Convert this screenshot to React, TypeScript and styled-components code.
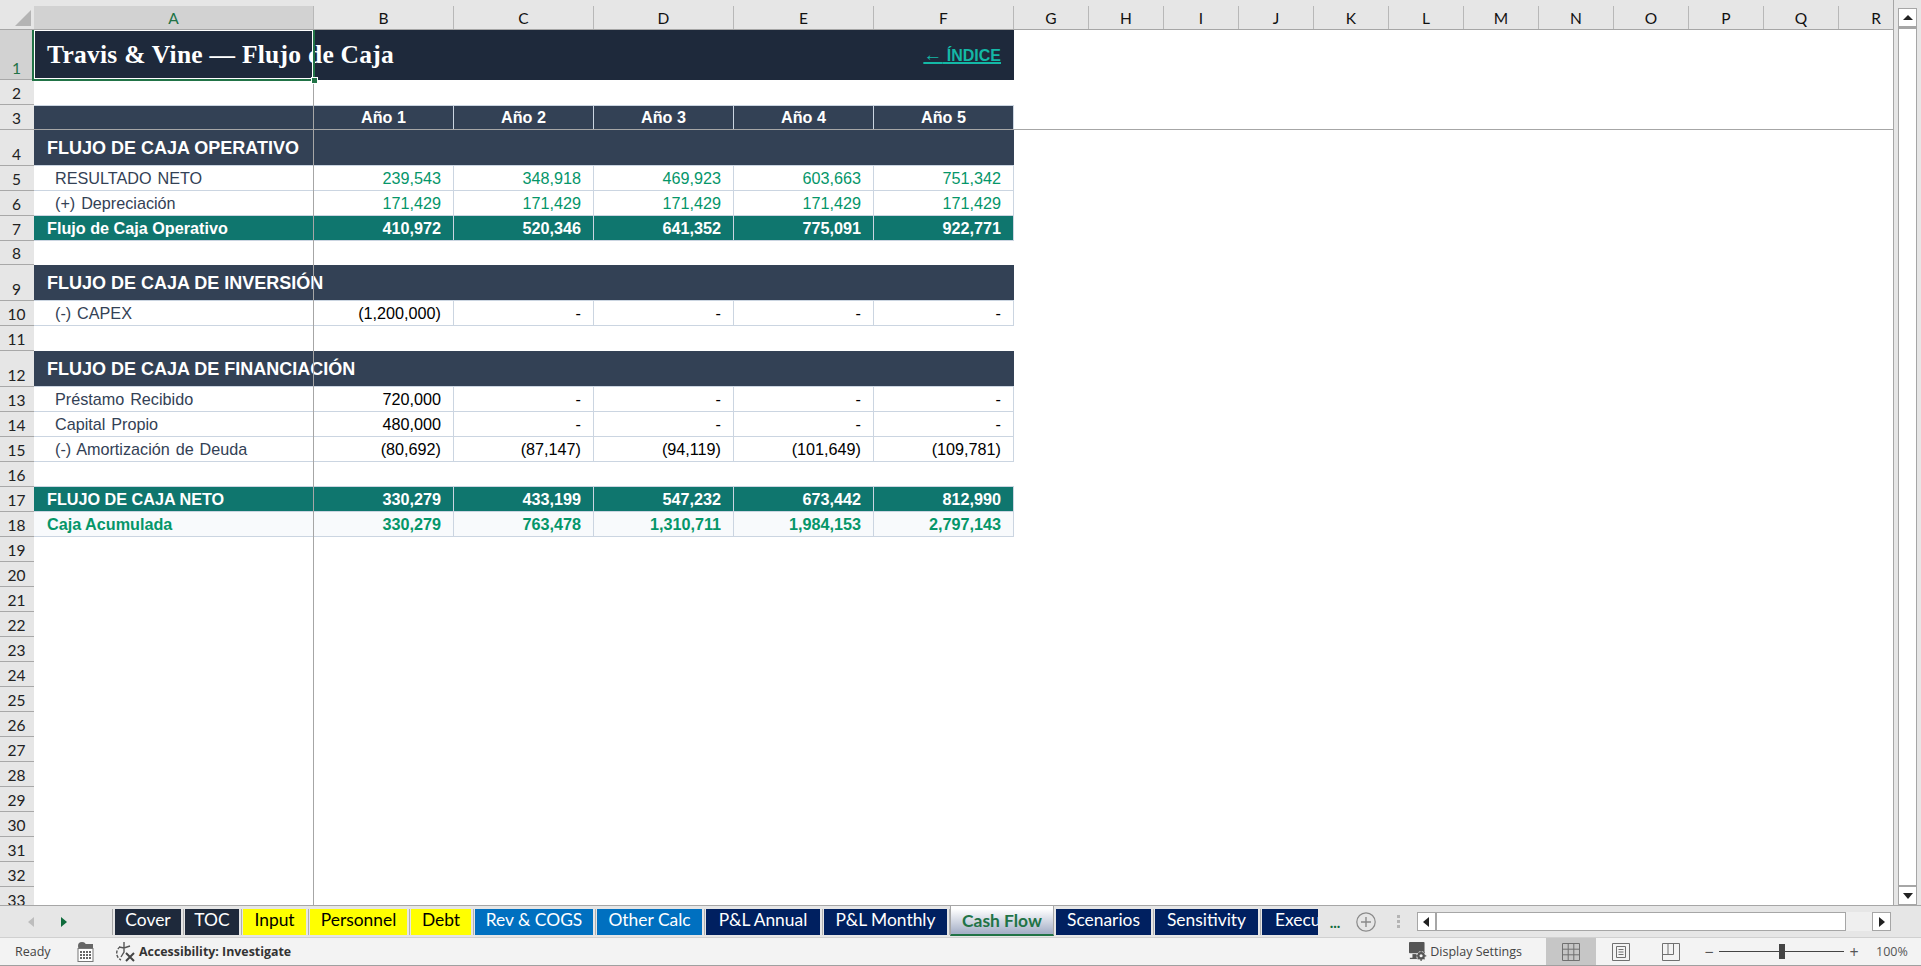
import styled, { createGlobalStyle, css } from 'styled-components'

const HAIR = '#cbd5e1'
const SLATE = '#334155'
const TEAL = '#0f766e'
const GREEN = '#059669'
const XL_GREEN = '#217346'
const CHROME = '#e6e6e6'
const LINE = '#a6a6a6'

const COLUMNS = [
  { name: 'A', width: 280 },
  { name: 'B', width: 140 },
  { name: 'C', width: 140 },
  { name: 'D', width: 140 },
  { name: 'E', width: 140 },
  { name: 'F', width: 140 },
  ...'GHIJKLMNOPQR'.split('').map((name) => ({ name, width: 75 })),
]

const ROW_HEIGHTS = [
  50, 25, 25, 36, 25, 25, 25, 24, 36, 25, 25, 36, 25, 25, 25, 25, 25, 25, 25, 25, 25, 25, 25, 25,
  25, 25, 25, 25, 25, 25, 25, 25, 25,
]

type Tone = 'dark' | 'yellow' | 'blue' | 'navy'

const TABS: { label: string; width: number; tone: Tone }[] = [
  { label: 'Cover', width: 66, tone: 'dark' },
  { label: 'TOC', width: 54, tone: 'dark' },
  { label: 'Input', width: 63, tone: 'yellow' },
  { label: 'Personnel', width: 97, tone: 'yellow' },
  { label: 'Debt', width: 60, tone: 'yellow' },
  { label: 'Rev & COGS', width: 118, tone: 'blue' },
  { label: 'Other Calc', width: 105, tone: 'blue' },
  { label: 'P&L Annual', width: 114, tone: 'navy' },
  { label: 'P&L Monthly', width: 123, tone: 'navy' },
]

const TABS_AFTER: { label: string; width: number; tone: Tone }[] = [
  { label: 'Scenarios', width: 95, tone: 'navy' },
  { label: 'Sensitivity', width: 103, tone: 'navy' },
]

const TAB_BG: Record<Tone, string> = {
  dark: '#1e293b',
  yellow: '#ffff00',
  blue: '#0070c0',
  navy: '#002060',
}

const GlobalStyle = createGlobalStyle`
  html, body {
    margin: 0;
    padding: 0;
    background: #fff;
    overflow: hidden;
  }
  * {
    box-sizing: border-box;
  }
`

const DataLine = ({
  label,
  values,
  green,
}: {
  label: string
  values: string[]
  green?: boolean
}) => (
  <Row $h={25}>
    <LabelCell>{label}</LabelCell>
    {values.map((v, i) => (
      <ValueCell key={i} $green={green}>
        {v}
      </ValueCell>
    ))}
  </Row>
)

const TotalLine = ({ label, values }: { label: string; values: string[] }) => (
  <Row $h={25}>
    <TotalLabel>{label}</TotalLabel>
    {values.map((v, i) => (
      <TotalValue key={i}>{v}</TotalValue>
    ))}
  </Row>
)

const AccumLine = ({ label, values }: { label: string; values: string[] }) => (
  <Row $h={25}>
    <AccumLabel>{label}</AccumLabel>
    {values.map((v, i) => (
      <AccumValue key={i}>{v}</AccumValue>
    ))}
  </Row>
)

const Triangle = ({ dir, color }: { dir: 'left' | 'right' | 'up' | 'down'; color: string }) => {
  const points = {
    left: '8,1 8,11 2,6',
    right: '3,1 3,11 9,6',
    up: '1,8 11,8 6,3',
    down: '1,3 11,3 6,9',
  }[dir]
  return (
    <svg width="12" height="12" viewBox="0 0 12 12">
      <polygon points={points} fill={color} />
    </svg>
  )
}

const MacroIcon = () => (
  <svg width="17" height="20" viewBox="0 0 17 20">
    <circle cx="5" cy="4" r="4" fill="#666" />
    <rect x="8" y="2" width="8" height="4" fill="#666" />
    <rect x="1" y="6.5" width="15" height="13" fill="#fff" stroke="#777" />
    <g fill="#666">
      {[9, 12, 15].map((y) =>
        [4, 7, 10, 13].map((x) => <rect key={`${x}-${y}`} x={x - 1} y={y} width="2" height="2" />),
      )}
    </g>
  </svg>
)

const AccessIcon = () => (
  <svg width="20" height="22" viewBox="0 0 20 22" fill="none" stroke="#555" strokeWidth="1.4">
    <path d="M5 6a7.5 7.5 0 0 0 1 13" strokeDasharray="3 1.5" />
    <path d="M9 1v6M4 6l5 1 6-2M9 7v4l-3 5" />
    <path d="M11 12l8 8M19 12l-8 8" stroke="#444" strokeWidth="2" />
  </svg>
)

const DisplayIcon = () => (
  <svg width="19" height="21" viewBox="0 0 22 24">
    <rect x="0" y="1" width="18" height="13" rx="1" fill="#555" />
    <rect x="4" y="15" width="5" height="5" fill="#555" />
    <path d="M1 20h8" stroke="#555" strokeWidth="1.5" />
    <circle cx="14" cy="17" r="5" fill="#555" stroke="#f3f3f3" />
    <path d="M14 11v12M8 17h12M10 13l8 8M18 13l-8 8" stroke="#555" strokeWidth="1.4" />
    <circle cx="14" cy="17" r="1.8" fill="#f3f3f3" />
  </svg>
)

const NormalViewIcon = () => (
  <svg width="18" height="18" viewBox="0 0 18 18" fill="none" stroke="#707070">
    <path d="M.5.5h17v17H.5zM6.2.5v17M11.8.5v17M.5 6.2h17M.5 11.8h17" />
  </svg>
)

const LayoutViewIcon = () => (
  <svg width="18" height="18" viewBox="0 0 18 18" fill="none" stroke="#707070">
    <path d="M.5.5h17v17H.5zM4.5 3.5h9v11h-9zM6.5 6.5h5M6.5 9h5M6.5 11.5h5" />
  </svg>
)

const BreakViewIcon = () => (
  <svg width="18" height="18" viewBox="0 0 18 18" fill="none" stroke="#707070">
    <path d="M.5.5h17v17H.5zM.5 11.5h11V.5M6 .5v11" />
  </svg>
)

export default function App() {
  return (
    <Window>
      <GlobalStyle />
      <Workspace>
        <SheetPane>
          <HeaderStrip>
            <Corner>
              <svg width="16" height="16" viewBox="0 0 16 16">
                <polygon points="16,0 16,16 0,16" fill="#b4b4b4" />
              </svg>
            </Corner>
            {COLUMNS.map((c) => (
              <ColHead key={c.name} $w={c.width} $active={c.name === 'A'}>
                {c.name}
              </ColHead>
            ))}
          </HeaderStrip>
          <SheetBody>
            <RowHeads>
              {ROW_HEIGHTS.map((h, i) => (
                <RowHead key={i} $h={h} $active={i === 0}>
                  {i + 1}
                </RowHead>
              ))}
            </RowHeads>
            <Grid>
              <TitleRow>
                <TitleText>Travis &amp; Vine — Flujo de Caja</TitleText>
                <BackLink>
                  <LinkArrow>←</LinkArrow> ÍNDICE
                </BackLink>
                <Selection>
                  <FillHandle />
                </Selection>
              </TitleRow>
              <Blank $h={25} />
              <Row $h={25}>
                <YearCell />
                {['Año 1', 'Año 2', 'Año 3', 'Año 4', 'Año 5'].map((y) => (
                  <YearCell key={y}>{y}</YearCell>
                ))}
              </Row>
              <SectionRow>FLUJO DE CAJA OPERATIVO</SectionRow>
              <DataLine
                label="RESULTADO NETO"
                values={['239,543', '348,918', '469,923', '603,663', '751,342']}
                green
              />
              <DataLine
                label="(+) Depreciación"
                values={['171,429', '171,429', '171,429', '171,429', '171,429']}
                green
              />
              <TotalLine
                label="Flujo de Caja Operativo"
                values={['410,972', '520,346', '641,352', '775,091', '922,771']}
              />
              <Blank $h={24} />
              <SectionRow>FLUJO DE CAJA DE INVERSIÓN</SectionRow>
              <DataLine label="(-) CAPEX" values={['(1,200,000)', '-', '-', '-', '-']} />
              <Blank $h={25} />
              <SectionRow>FLUJO DE CAJA DE FINANCIACIÓN</SectionRow>
              <DataLine label="Préstamo Recibido" values={['720,000', '-', '-', '-', '-']} />
              <DataLine label="Capital Propio" values={['480,000', '-', '-', '-', '-']} />
              <DataLine
                label="(-) Amortización de Deuda"
                values={['(80,692)', '(87,147)', '(94,119)', '(101,649)', '(109,781)']}
              />
              <Blank $h={25} />
              <TotalLine
                label="FLUJO DE CAJA NETO"
                values={['330,279', '433,199', '547,232', '673,442', '812,990']}
              />
              <AccumLine
                label="Caja Acumulada"
                values={['330,279', '763,478', '1,310,711', '1,984,153', '2,797,143']}
              />
              <FreezeColumn />
              <FreezeRow />
            </Grid>
          </SheetBody>
        </SheetPane>
        <VScroll>
          <ScrollButton>
            <Triangle dir="up" color="#222" />
          </ScrollButton>
          <VThumb />
          <ScrollButton>
            <Triangle dir="down" color="#222" />
          </ScrollButton>
        </VScroll>
      </Workspace>
      <TabBar>
        <TabNav>
          <Triangle dir="left" color="#bdbdbd" />
          <Triangle dir="right" color="#0f6b3c" />
        </TabNav>
        <TabList>
          {TABS.map((t) => (
            <Tab key={t.label} $w={t.width} $tone={t.tone}>
              {t.label}
            </Tab>
          ))}
          <ActiveTab>Cash Flow</ActiveTab>
          {TABS_AFTER.map((t) => (
            <Tab key={t.label} $w={t.width} $tone={t.tone}>
              {t.label}
            </Tab>
          ))}
          <ClippedTab>Execu</ClippedTab>
        </TabList>
        <MoreTabs>...</MoreTabs>
        <AddTab>
          <svg width="20" height="20" viewBox="0 0 20 20" fill="none" stroke="#8a8a8a">
            <circle cx="10" cy="10" r="9.2" strokeWidth="1.2" />
            <path d="M10 5v10M5 10h10" strokeWidth="1.4" />
          </svg>
        </AddTab>
        <SplitDots>
          <i />
          <i />
          <i />
        </SplitDots>
        <HScroll>
          <ScrollButton>
            <Triangle dir="left" color="#222" />
          </ScrollButton>
          <HThumb />
          <ScrollButton>
            <Triangle dir="right" color="#222" />
          </ScrollButton>
        </HScroll>
      </TabBar>
      <StatusBar>
        <StatusLeft>
          <StatusText>Ready</StatusText>
          <IconSlot $ml={27}>
            <MacroIcon />
          </IconSlot>
          <IconSlot $ml={21}>
            <AccessIcon />
          </IconSlot>
          <AccessText>Accessibility: Investigate</AccessText>
        </StatusLeft>
        <StatusRight>
          <IconSlot $ml={0}>
            <DisplayIcon />
          </IconSlot>
          <DisplayText>Display Settings</DisplayText>
          <ViewButton $active>
            <NormalViewIcon />
          </ViewButton>
          <ViewButton>
            <LayoutViewIcon />
          </ViewButton>
          <ViewButton>
            <BreakViewIcon />
          </ViewButton>
          <ZoomGroup>
            <ZoomSign>−</ZoomSign>
            <ZoomTrack>
              <ZoomThumb />
            </ZoomTrack>
            <ZoomSign>+</ZoomSign>
            <ZoomValue>100%</ZoomValue>
          </ZoomGroup>
        </StatusRight>
      </StatusBar>
    </Window>
  )
}

const Window = styled.div`
  width: 1921px;
  height: 966px;
  display: flex;
  flex-direction: column;
  overflow: hidden;
  background: ${CHROME};
`

const Workspace = styled.div`
  height: 906px;
  display: flex;
  border-bottom: 1px solid ${LINE};
`

const SheetPane = styled.div`
  width: 1894px;
  display: flex;
  flex-direction: column;
  overflow: hidden;
  background: #fff;
  border-right: 1px solid ${LINE};
`

const HeaderStrip = styled.div`
  height: 30px;
  flex: none;
  display: flex;
  align-items: flex-end;
  background: ${CHROME};
  border-bottom: 1px solid ${LINE};
`

const Corner = styled.div`
  width: 34px;
  height: 29px;
  flex: none;
  display: flex;
  align-items: flex-end;
  justify-content: flex-end;
  padding: 0 3px 3px 0;
`

const ColHead = styled.div<{ $w: number; $active?: boolean }>`
  width: ${(p) => p.$w}px;
  height: 23px;
  flex: none;
  display: flex;
  align-items: center;
  justify-content: center;
  font-family: Lato, 'Liberation Sans', sans-serif;
  font-size: 15.5px;
  line-height: 22px;
  border-right: 1px solid #b8b8b8;
  color: ${(p) => (p.$active ? XL_GREEN : '#111')};
  background: ${(p) => (p.$active ? '#d2d2d2' : CHROME)};
`

const SheetBody = styled.div`
  flex: 1;
  min-height: 0;
  display: flex;
  overflow: hidden;
`

const RowHeads = styled.div`
  width: 34px;
  flex: none;
  display: flex;
  flex-direction: column;
`

const RowHead = styled.div<{ $h: number; $active?: boolean }>`
  height: ${(p) => p.$h}px;
  flex: none;
  display: flex;
  align-items: flex-end;
  justify-content: center;
  font-family: Lato, 'Liberation Sans', sans-serif;
  font-size: 15.5px;
  line-height: 22px;
  padding-right: 1px;
  border-bottom: 1px solid #a8a8a8;
  color: ${(p) => (p.$active ? XL_GREEN : '#222')};
  background: ${(p) => (p.$active ? '#d2d2d2' : CHROME)};
`

const Grid = styled.div`
  position: relative;
  flex: 1;
  display: flex;
  flex-direction: column;
  font-family: 'Liberation Sans', Arial, sans-serif;
  font-size: 16.2px;
`

const FreezeColumn = styled.div`
  position: absolute;
  left: 279px;
  top: 0;
  bottom: 0;
  width: 1px;
  background: ${LINE};
  z-index: 2;
`

const FreezeRow = styled.div`
  position: absolute;
  left: 0;
  right: 0;
  top: 99px;
  height: 1px;
  background: ${LINE};
  z-index: 2;
`

const TitleRow = styled.div`
  position: relative;
  width: 980px;
  height: 50px;
  flex: none;
  display: flex;
  align-items: center;
  justify-content: space-between;
  padding: 0 13px;
  background: #1e293b;
`

const TitleText = styled.div`
  font-family: 'Liberation Serif', Georgia, serif;
  font-weight: 700;
  font-size: 25.5px;
  letter-spacing: 0.26px;
  color: #fff;
  white-space: nowrap;
`

const BackLink = styled.a`
  font-weight: 700;
  font-size: 16px;
  color: #14b8a6;
  text-decoration: underline;
  text-decoration-thickness: 2px;
`

const LinkArrow = styled.span`
  font-weight: 400;
  font-size: 19px;
`

const Selection = styled.div`
  position: absolute;
  left: -2px;
  top: -2px;
  width: 283px;
  height: 53px;
  border: 2px solid ${XL_GREEN};
  box-shadow: inset 0 0 0 1px #fff;
  z-index: 3;
`

const FillHandle = styled.span`
  position: absolute;
  right: -5px;
  bottom: -5px;
  width: 7px;
  height: 7px;
  background: ${XL_GREEN};
  border: 1px solid #fff;
`

const Blank = styled.div<{ $h: number }>`
  height: ${(p) => p.$h}px;
  flex: none;
`

const Row = styled.div<{ $h: number }>`
  width: 980px;
  height: ${(p) => p.$h}px;
  flex: none;
  display: grid;
  grid-template-columns: 280px repeat(5, 140px);
`

const cellBase = css`
  display: flex;
  align-items: center;
  white-space: nowrap;
  border-bottom: 1px solid ${HAIR};
  border-right: 1px solid ${HAIR};
`

const YearCell = styled.div`
  ${cellBase}
  justify-content: center;
  font-weight: 700;
  font-size: 16.2px;
  color: #fff;
  background: ${SLATE};
  border-top: 1px solid ${HAIR};
`

const SectionRow = styled.div`
  width: 980px;
  height: 36px;
  flex: none;
  display: flex;
  align-items: center;
  padding: 2px 0 0 13px;
  font-weight: 700;
  font-size: 18px;
  color: #fff;
  white-space: nowrap;
  background: ${SLATE};
  border-bottom: 1px solid ${HAIR};
`

const LabelCell = styled.div`
  ${cellBase}
  padding-left: 21px;
  word-spacing: 1.4px;
  color: ${SLATE};
`

const ValueCell = styled.div<{ $green?: boolean }>`
  ${cellBase}
  justify-content: flex-end;
  padding-right: 12px;
  color: ${(p) => (p.$green ? GREEN : '#000')};
`

const TotalLabel = styled.div`
  ${cellBase}
  padding-left: 13px;
  font-weight: 700;
  color: #fff;
  background: ${TEAL};
  box-shadow: 0 -1px 0 ${HAIR};
`

const TotalValue = styled.div`
  ${cellBase}
  justify-content: flex-end;
  padding-right: 12px;
  font-weight: 700;
  color: #fff;
  background: ${TEAL};
  box-shadow: 0 -1px 0 ${HAIR};
`

const AccumLabel = styled.div`
  ${cellBase}
  padding-left: 13px;
  font-weight: 700;
  color: ${GREEN};
  background: #f8fafc;
`

const AccumValue = styled.div`
  ${cellBase}
  justify-content: flex-end;
  padding-right: 12px;
  font-weight: 700;
  color: ${GREEN};
  background: #f8fafc;
`

const VScroll = styled.div`
  flex: 1;
  display: flex;
  flex-direction: column;
  align-items: flex-start;
  padding: 8px 0 0 4px;
`

const ScrollButton = styled.div`
  width: 19px;
  height: 19px;
  flex: none;
  display: flex;
  align-items: center;
  justify-content: center;
  background: #fff;
  border: 1px solid ${LINE};
`

const VThumb = styled.div`
  width: 19px;
  height: 860px;
  background: #fff;
  border: 1px solid ${LINE};
  border-top-width: 2px;
`

const TabBar = styled.div`
  height: 32px;
  flex: none;
  display: flex;
  align-items: center;
  background: ${CHROME};
  border-bottom: 1px solid #d0d0d0;
`

const TabNav = styled.div`
  width: 113px;
  height: 26px;
  flex: none;
  display: flex;
  align-items: center;
  gap: 20px;
  padding-left: 26px;
  border-right: 1px solid ${LINE};
`

const TabList = styled.div`
  flex: none;
  width: 1206px;
  height: 100%;
  display: flex;
  align-items: flex-start;
  gap: 4px;
  padding: 3px 0 0 2px;
  overflow: hidden;
`

const tabBase = css`
  height: 26px;
  flex: none;
  display: flex;
  align-items: center;
  justify-content: center;
  padding-bottom: 5px;
  font-family: Lato, 'Liberation Sans', sans-serif;
  font-size: 17.4px;
  white-space: nowrap;
`

const Tab = styled.div<{ $w: number; $tone: Tone }>`
  ${tabBase}
  position: relative;
  width: ${(p) => p.$w}px;
  background: ${(p) => TAB_BG[p.$tone]};
  color: ${(p) => (p.$tone === 'yellow' ? '#000' : '#fff')};

  &::after {
    content: '';
    position: absolute;
    top: 0;
    bottom: 0;
    right: -3px;
    width: 1px;
    background: #b0b0b0;
  }
`

const ActiveTab = styled.div`
  ${tabBase}
  width: 104px;
  height: 30px;
  margin: -3px -2px 0 -1px;
  padding-bottom: 0;
  font-weight: 700;
  color: ${XL_GREEN};
  background: linear-gradient(#ffffff 10%, #a7b1c8 95%);
  border-left: 1px solid ${LINE};
  border-right: 1px solid ${LINE};
  border-bottom: 2px solid ${XL_GREEN};
`

const ClippedTab = styled.div`
  ${tabBase}
  width: 56px;
  justify-content: flex-start;
  padding-left: 13px;
  overflow: hidden;
  color: #fff;
  background: #002060;
`

const MoreTabs = styled.div`
  width: 32px;
  flex: none;
  text-align: center;
  font-family: Lato, sans-serif;
  font-size: 15px;
  font-weight: 700;
  color: #0f6b3c;
`

const AddTab = styled.div`
  width: 30px;
  flex: none;
  display: flex;
  justify-content: center;
`

const SplitDots = styled.div`
  width: 34px;
  flex: none;
  display: flex;
  flex-direction: column;
  align-items: center;
  gap: 2px;

  i {
    width: 3px;
    height: 3px;
    background: #b4b4b4;
  }
`

const HScroll = styled.div`
  margin-left: 2px;
  width: 474px;
  height: 19px;
  flex: none;
  display: flex;
  background: #efefef;
  justify-content: space-between;
  position: relative;
`

const HThumb = styled.div`
  width: 410px;
  height: 19px;
  margin-right: auto;
  background: #fff;
  border: 1px solid ${LINE};
`

const StatusBar = styled.div`
  height: 28px;
  flex: none;
  display: flex;
  align-items: center;
  justify-content: space-between;
  padding-left: 15px;
  background: #f3f3f3;
  border-bottom: 1px solid #a0a0a0;
  font-family: 'Open Sans', 'Noto Sans', sans-serif;
  font-size: 12.5px;
  color: #444;
`

const StatusLeft = styled.div`
  display: flex;
  align-items: center;
`

const StatusRight = styled.div`
  height: 100%;
  display: flex;
  align-items: center;
`

const StatusText = styled.span`
  width: 35px;
`

const IconSlot = styled.span<{ $ml: number }>`
  display: flex;
  margin-left: ${(p) => p.$ml}px;
`

const AccessText = styled.span`
  margin-left: 4px;
  font-size: 12.4px;
  font-weight: 700;
  color: #333;
`

const DisplayText = styled.span`
  margin: 0 24px 0 2px;
`

const ViewButton = styled.div<{ $active?: boolean }>`
  width: 50px;
  height: 100%;
  flex: none;
  display: flex;
  align-items: center;
  justify-content: center;
  background: ${(p) => (p.$active ? '#c6c6c6' : 'transparent')};
`

const ZoomGroup = styled.div`
  margin-left: 3px;
  display: flex;
  align-items: center;
`

const ZoomSign = styled.span`
  width: 20px;
  text-align: center;
  font-size: 16px;
  color: #555;
`

const ZoomTrack = styled.div`
  position: relative;
  width: 125px;
  height: 1px;
  background: #444;
`

const ZoomThumb = styled.span`
  position: absolute;
  left: 60px;
  top: -7px;
  width: 6px;
  height: 15px;
  background: #444;
`

const ZoomValue = styled.span`
  width: 57px;
  padding-left: 12px;
  color: #555;
`
